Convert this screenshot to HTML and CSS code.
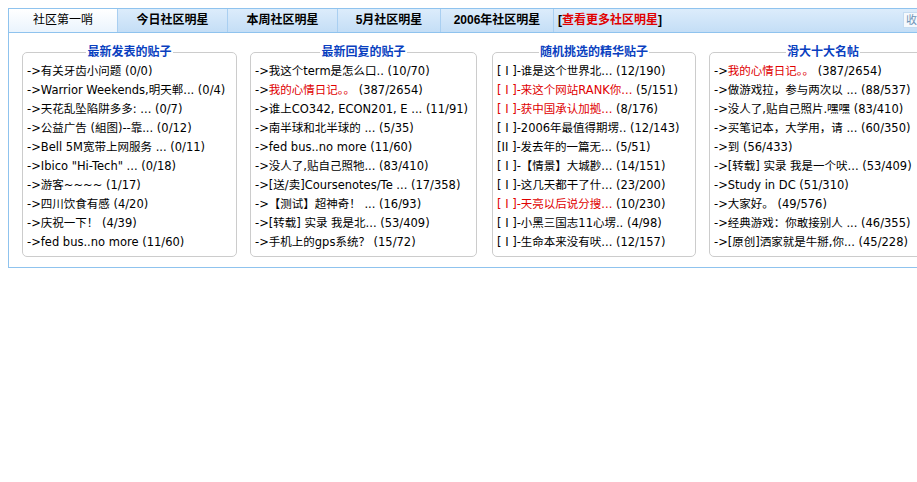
FILE: index.html
```html
<!DOCTYPE html>
<html lang="zh-CN">
<head>
    <meta charset="UTF-8">
    <title>社区第一哨</title>
    <link rel="stylesheet" href="styles.css">
</head>
<body>
    <div class="frame">
    <div class="star-box">
        <div class="tab-bar">
            <span class="tab tab-active" style="width: 108px">社区第一哨</span>
            <span class="tab" style="width: 109px">今日社区明星</span>
            <span class="tab" style="width: 109px">本周社区明星</span>
            <span class="tab" style="width: 102px">5月社区明星</span>
            <span class="tab" style="width: 112px">2006年社区明星</span>
            <span class="tab tab-more">[<a href="#">查看更多社区明星</a>]</span>
            <span class="fold-btn">收起</span>
        </div>

        <div class="panel">
            <fieldset class="post-list" style="width: 215px">
                <legend>最新发表的贴子</legend>
                <div class="row">->有关牙齿小问题 (0/0)</div>
                <div class="row">->Warrior Weekends,明天郸... (0/4)</div>
                <div class="row">->天花乱坠陷阱多多: ... (0/7)</div>
                <div class="row">->公益广告 (組图)--靠... (0/12)</div>
                <div class="row">->Bell 5M宽带上网服务 ... (0/11)</div>
                <div class="row">->Ibico "Hi-Tech" ... (0/18)</div>
                <div class="row">->游客~~~~ (1/17)</div>
                <div class="row">->四川饮食有感 (4/20)</div>
                <div class="row">->庆祝一下！ (4/39)</div>
                <div class="row">->fed bus..no more (11/60)</div>
            </fieldset>

            <fieldset class="post-list" style="width: 227px">
                <legend>最新回复的贴子</legend>
                <div class="row">->我这个term是怎么口.. (10/70)</div>
                <div class="row">-><span class="hot">我的心情日记。。</span> (387/2654)</div>
                <div class="row">->谁上CO342, ECON201, E ... (11/91)</div>
                <div class="row">->南半球和北半球的 ... (5/35)</div>
                <div class="row">->fed bus..no more (11/60)</div>
                <div class="row">->没人了,贴自己照牠... (83/410)</div>
                <div class="row">->[送/卖]Coursenotes/Te ... (17/358)</div>
                <div class="row">->【测试】超神奇！ ... (16/93)</div>
                <div class="row">->[转载] 实录 我是北... (53/409)</div>
                <div class="row">->手机上的gps系统？ (15/72)</div>
            </fieldset>

            <fieldset class="post-list wide-gap" style="width: 204px">
                <legend>随机挑选的精华贴子</legend>
                <div class="row">[ Ⅰ ]-谁是这个世界北... (12/190)</div>
                <div class="row"><span class="hot">[ Ⅰ ]-来这个网站RANK你...</span> (5/151)</div>
                <div class="row"><span class="hot">[ Ⅰ ]-获中国承认加拠...</span> (8/176)</div>
                <div class="row">[ Ⅰ ]-2006年最值得期塄.. (12/143)</div>
                <div class="row">[ⅠⅠ ]-发去年的一篇无... (5/51)</div>
                <div class="row">[ Ⅰ ]-【情景】大城尠... (14/151)</div>
                <div class="row">[ Ⅰ ]-这几天都干了什... (23/200)</div>
                <div class="row"><span class="hot">[ Ⅰ ]-天亮以后说分搜...</span> (10/230)</div>
                <div class="row">[ Ⅰ ]-小黑三国志11心塄.. (4/98)</div>
                <div class="row">[ Ⅰ ]-生命本来没有吠... (12/157)</div>
            </fieldset>

            <fieldset class="post-list" style="width: 228px">
                <legend>滑大十大名帖</legend>
                <div class="row">-><span class="hot">我的心情日记。。</span> (387/2654)</div>
                <div class="row">->做游戏拉，参与两次以 ... (88/537)</div>
                <div class="row">->没人了,贴自己照片.嘿嘿 (83/410)</div>
                <div class="row">->买笔记本，大学用，请 ... (60/350)</div>
                <div class="row">->到 (56/433)</div>
                <div class="row">->[转载] 实录 我是一个吠... (53/409)</div>
                <div class="row">->Study in DC (51/310)</div>
                <div class="row">->大家好。 (49/576)</div>
                <div class="row">->经典游戏：你敢接别人 ... (46/355)</div>
                <div class="row">->[原创]洒家就是牛掰,你... (45/228)</div>
            </fieldset>
        </div>
    </div>
    </div>
</body>
</html>
```

FILE: styles.css
```css
body {
    margin: 8px 0 8px 8px;
    background-color: #fff;
    font-family: "DejaVu Sans", "Noto Sans CJK SC", sans-serif;
    font-size: 11.5px;
    color: #000;
}

/* the box is wider than the window, the right side is cut off */
.frame {
    overflow: hidden;
}

.star-box {
    width: 1000px;
    border: 1px solid #8fc3ee;
}

.tab-bar {
    display: flex;
    align-items: stretch;
    height: 23px;
    background: linear-gradient(#dcecfb, #c4def6);
    border-bottom: 1px solid #8fc3ee;
    position: relative;
    font-family: "Liberation Sans", "Noto Sans CJK SC", sans-serif;
    font-size: 12px;
}

.tab {
    display: flex;
    align-items: center;
    justify-content: center;
    border-right: 1px solid #a9cff1;
    font-weight: bold;
    line-height: 23px;
}

.tab-active {
    background: linear-gradient(#ffffff, #eaf4fd);
    font-weight: normal;
}

.tab-more {
    border-right: none;
    padding-left: 4px;
}

.tab-more a {
    color: #e00000;
    text-decoration: none;
}

.fold-btn {
    position: absolute;
    top: 3px;
    left: 894px;
    height: 14px;
    padding: 0 2px;
    line-height: 14px;
    background-color: #f5f9fd;
    border: 1px solid #c5dcf1;
    color: #6f93b6;
    font-size: 11px;
}

.panel {
    display: flex;
    gap: 13px;
    padding: 12px 13px 10px;
}

.post-list {
    box-sizing: border-box;
    margin: 0;
    padding: 3px 4px 4px;
    border: 1px solid #cccccc;
    border-radius: 5px;
}

.wide-gap {
    margin-left: 2px;
}

.post-list legend {
    margin: 0 auto;
    padding: 0 1px;
    color: #0a3fbf;
    font-family: "Liberation Sans", "Noto Sans CJK SC", sans-serif;
    font-size: 12px;
    font-weight: bold;
    line-height: 14px;
}

.row {
    height: 19px;
    line-height: 19px;
    white-space: nowrap;
    overflow: hidden;
}

.hot {
    color: #e00000;
}
```
